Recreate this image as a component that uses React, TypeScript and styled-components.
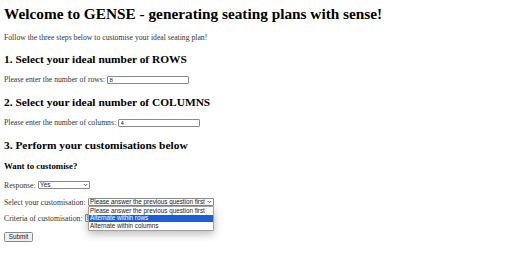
import React from "react";
import styled, { createGlobalStyle } from "styled-components";

const GlobalStyle = createGlobalStyle`
  html, body {
    margin: 0;
    padding: 0;
    background: #ffffff;
  }
  body {
    font-family: "Liberation Serif", "Times New Roman", serif;
    color: #111111;
  }
`;

const Page = styled.div`
  padding: 0 4px;
  display: flow-root;
`;

const Title = styled.h1`
  margin: 5.3px 0 0;
  font-size: 15.3px;
  line-height: 18px;
  font-weight: 700;
  color: #000;
`;

const Intro = styled.p`
  margin: 9.6px 0 0;
  font-size: 7.7px;
  line-height: 9px;
  color: #333;
`;

const SectionTitle = styled.h2<{ $gap: number }>`
  margin: ${(p) => p.$gap}px 0 0;
  font-size: 11.4px;
  line-height: 13px;
  font-weight: 700;
  color: #000;
`;

const SubTitle = styled.h3`
  margin: 9.4px 0 0;
  font-size: 8.8px;
  line-height: 10px;
  font-weight: 700;
  color: #000;
`;

const FieldRow = styled.div<{ $gap: number }>`
  margin-top: ${(p) => p.$gap}px;
  display: flex;
  align-items: center;
  gap: 2px;
  height: 9px;
  font-size: 7.7px;
  line-height: 9px;
  color: #333;
`;

const Label = styled.label`
  white-space: nowrap;
`;

const TextInput = styled.input`
  box-sizing: border-box;
  width: 82px;
  height: 8px;
  padding: 0 1.5px;
  border: 1px solid #8a8a8a;
  border-radius: 1px;
  font-family: "Liberation Sans", Arial, sans-serif;
  font-size: 6.2px;
  line-height: 6px;
  color: #222;
  background: #fff;
  outline: none;
`;

const SelectWrap = styled.div`
  position: relative;
`;

const SelectBox = styled.div<{ $width: number }>`
  box-sizing: border-box;
  width: ${(p) => p.$width}px;
  height: 8px;
  padding: 0 1px 0 1.5px;
  border: 1px solid #8a8a8a;
  border-radius: 1px;
  display: flex;
  align-items: center;
  justify-content: space-between;
  font-family: "Liberation Sans", Arial, sans-serif;
  font-size: 6.3px;
  line-height: 6px;
  color: #222;
  background: #fff;
  white-space: nowrap;
  overflow: hidden;
`;

const Chevron = styled.svg`
  flex: none;
  width: 5px;
  height: 4px;
`;

const Popup = styled.ul`
  position: absolute;
  left: 0;
  top: 8px;
  z-index: 2;
  box-sizing: border-box;
  width: 126px;
  margin: 0;
  padding: 0;
  list-style: none;
  background: #fff;
  border: 1px solid #a0a0a0;
  border-radius: 1px;
  box-shadow: 0 3px 9px rgba(0, 0, 0, 0.28);
`;

const Option = styled.li<{ $active?: boolean }>`
  height: 7.5px;
  padding: 0 1.5px;
  display: flex;
  align-items: center;
  font-family: "Liberation Sans", Arial, sans-serif;
  font-size: 6.3px;
  line-height: 6px;
  white-space: nowrap;
  color: ${(p) => (p.$active ? "#fff" : "#222")};
  background: ${(p) => (p.$active ? "#1a5fd6" : "transparent")};
`;

const SubmitButton = styled.button`
  margin-top: 9.5px;
  box-sizing: border-box;
  height: 10px;
  width: 29px;
  padding: 0;
  border: 1px solid #8a8a8a;
  border-radius: 1.5px;
  background: #efefef;
  font-family: "Liberation Sans", Arial, sans-serif;
  font-size: 6.3px;
  line-height: 6px;
  color: #222;
  display: block;
`;

const ChevronIcon = () => (
  <Chevron viewBox="0 0 10 8">
    <path d="M1.5 2 L5 5.5 L8.5 2" fill="none" stroke="#333" strokeWidth="1.4" />
  </Chevron>
);

export default function App() {
  return (
    <>
      <GlobalStyle />
      <Page>
        <Title>Welcome to GENSE - generating seating plans with sense!</Title>
        <Intro>Follow the three steps below to customise your ideal seating plan!</Intro>

        <SectionTitle $gap={10.75}>1. Select your ideal number of ROWS</SectionTitle>
        <FieldRow $gap={9.85}>
          <Label>Please enter the number of rows:</Label>
          <TextInput defaultValue="8" />
        </FieldRow>

        <SectionTitle $gap={11.15}>2. Select your ideal number of COLUMNS</SectionTitle>
        <FieldRow $gap={9.55}>
          <Label>Please enter the number of columns:</Label>
          <TextInput defaultValue="4" />
        </FieldRow>

        <SectionTitle $gap={11.45}>3. Perform your customisations below</SectionTitle>
        <SubTitle>Want to customise?</SubTitle>

        <FieldRow $gap={9.5}>
          <Label>Response:</Label>
          <SelectWrap>
            <SelectBox $width={52}>
              <span>Yes</span>
              <ChevronIcon />
            </SelectBox>
          </SelectWrap>
        </FieldRow>

        <FieldRow $gap={8}>
          <Label>Select your customisation:</Label>
          <SelectWrap>
            <SelectBox $width={126}>
              <span>Please answer the previous question first</span>
              <ChevronIcon />
            </SelectBox>
            <Popup>
              <Option>Please answer the previous question first</Option>
              <Option $active>Alternate within rows</Option>
              <Option>Alternate within columns</Option>
            </Popup>
          </SelectWrap>
        </FieldRow>

        <FieldRow $gap={7}>
          <Label>Criteria of customisation:</Label>
          <SelectWrap>
            <SelectBox $width={126}>
              <span>Please answer the previous question first</span>
              <ChevronIcon />
            </SelectBox>
          </SelectWrap>
        </FieldRow>

        <SubmitButton type="button">Submit</SubmitButton>
      </Page>
    </>
  );
}
